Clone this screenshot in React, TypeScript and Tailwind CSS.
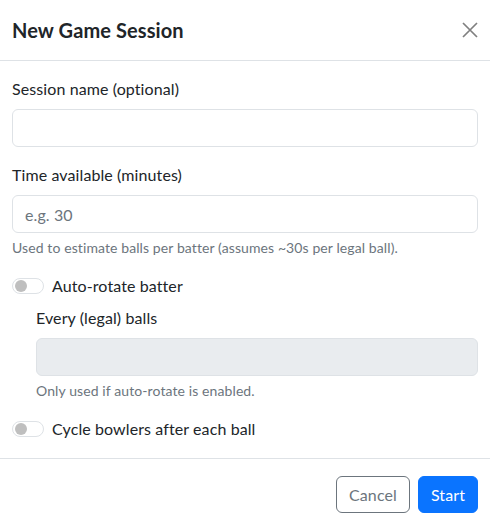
import { useState } from "react";

function Switch({ checked, onChange }: { checked: boolean; onChange: (v: boolean) => void }) {
  return (
    <button
      type="button"
      role="switch"
      aria-checked={checked}
      onClick={() => onChange(!checked)}
      className={`relative h-4 w-8 shrink-0 rounded-full border transition-colors ${
        checked ? "border-[#0d6efd] bg-[#0d6efd]" : "border-[#dee2e6] bg-white"
      }`}
    >
      <span
        className={`absolute top-[1px] h-3 w-3 rounded-full transition-all ${
          checked ? "left-[17px] bg-white" : "left-[2px] bg-[#bfbfbf]"
        }`}
      />
    </button>
  );
}

export default function App() {
  const [autoRotate, setAutoRotate] = useState(false);
  const [cycleBowlers, setCycleBowlers] = useState(false);

  return (
    <div className="min-h-screen w-full bg-white text-[#212529] font-['Lato',sans-serif] tracking-[0.1px]">
      {/* Header */}
      <div className="flex h-[61px] items-center justify-between border-b border-[#dee2e6] px-3">
        <h5 className="text-[20px] font-bold leading-[30px]">New Game Session</h5>
        <button type="button" className="flex h-4 w-4 items-center justify-center text-[#808080]">
          <svg viewBox="0 0 16 16" className="h-4 w-4" fill="none" stroke="currentColor" strokeWidth="1.7">
            <path d="M1 1l14 14M15 1L1 15" />
          </svg>
        </button>
      </div>

      {/* Body */}
      <div className="px-3 pt-4 pb-[17px] text-base leading-6">
        <div className="mb-4">
          <label className="mb-2 block">Session name (optional)</label>
          <input
            type="text"
            className="block h-[38px] w-full rounded-md border border-[#dee2e6] px-3 outline-none"
          />
        </div>

        <div className="mb-4">
          <label className="mb-2 block">Time available (minutes)</label>
          <input
            type="number"
            placeholder="e.g. 30"
            className="block h-[38px] w-full rounded-md border border-[#dee2e6] px-3 outline-none placeholder:text-[#6c757d]"
          />
          <div className="mt-1 text-[14px] leading-[21px] text-[#6c757d]">
            Used to estimate balls per batter (assumes ~30s per legal ball).
          </div>
        </div>

        <div className="mb-2 flex items-center gap-2">
          <Switch checked={autoRotate} onChange={setAutoRotate} />
          <span>Auto-rotate batter</span>
        </div>

        <div className="mb-4 pl-6">
          <label className="mb-2 block">Every (legal) balls</label>
          <input
            type="number"
            disabled={!autoRotate}
            className="block h-[38px] w-full rounded-md border border-[#dee2e6] px-3 outline-none disabled:bg-[#e9ecef]"
          />
          <div className="mt-1 text-[14px] leading-[21px] text-[#6c757d]">
            Only used if auto-rotate is enabled.
          </div>
        </div>

        <div className="flex items-center gap-2">
          <Switch checked={cycleBowlers} onChange={setCycleBowlers} />
          <span>Cycle bowlers after each ball</span>
        </div>
      </div>

      {/* Footer */}
      <div className="flex items-center justify-end gap-2 border-t border-[#dee2e6] px-3 pt-[17px] pb-4">
        <button
          type="button"
          className="h-[37px] rounded-md border border-[#6c757d] px-3 text-base text-[#6c757d]"
        >
          Cancel
        </button>
        <button
          type="button"
          className="h-[37px] rounded-md border border-[#0a74ff] bg-[#0a74ff] px-3 text-base text-white"
        >
          Start
        </button>
      </div>
    </div>
  );
}
